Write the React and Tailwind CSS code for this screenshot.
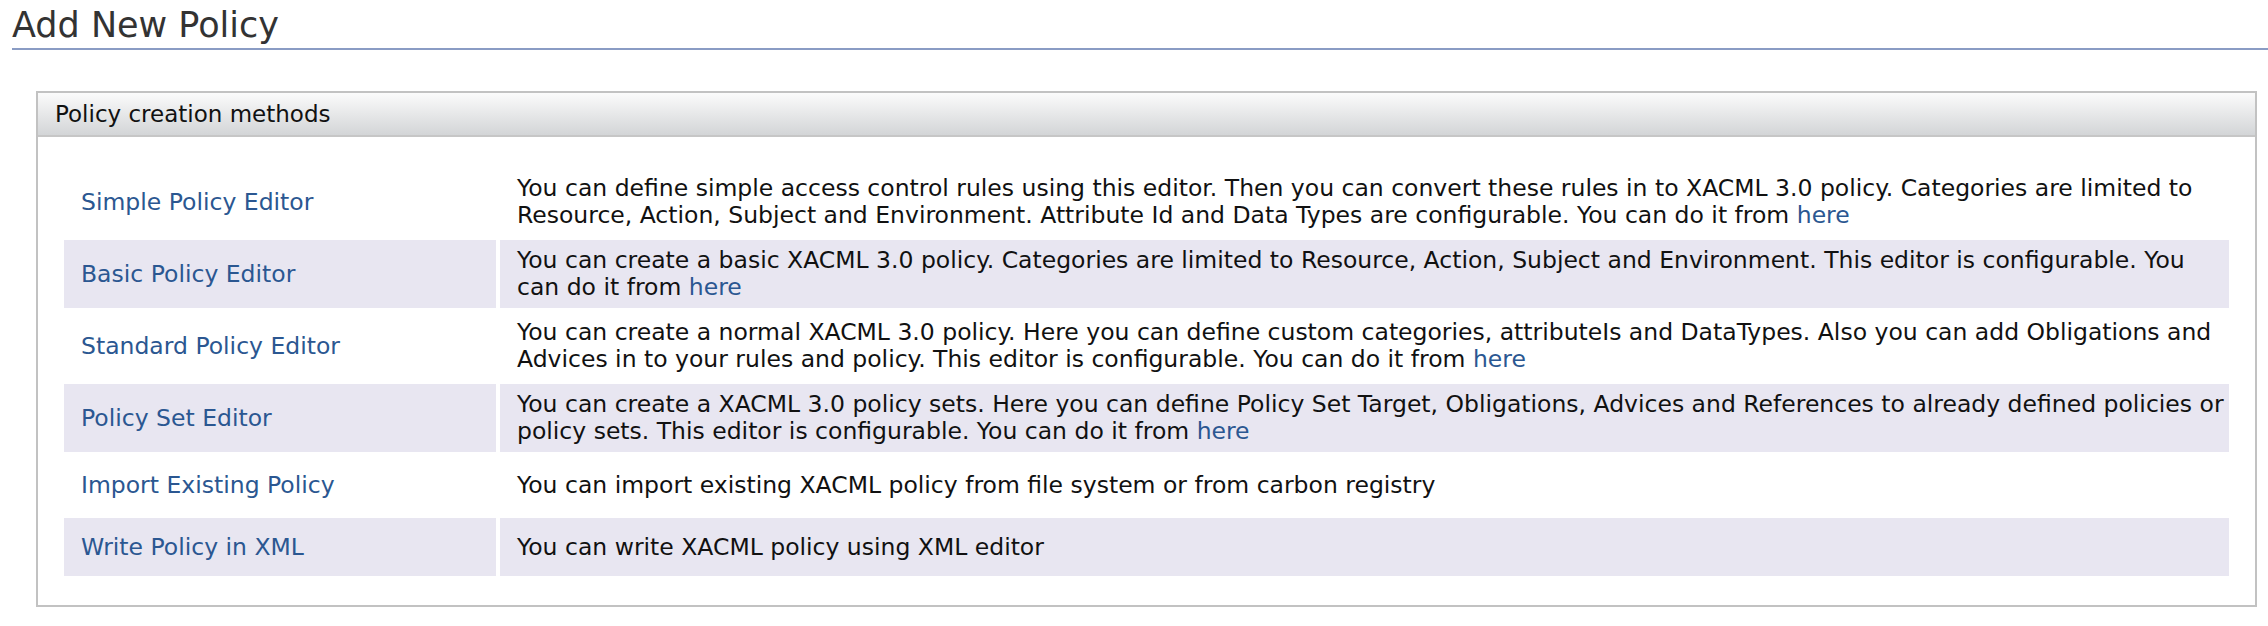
import React from "react";

const methods = [
  {
    name: "Simple Policy Editor",
    text: "You can define simple access control rules using this editor. Then you can convert these rules in to XACML 3.0 policy. Categories are limited to Resource, Action, Subject and Environment. Attribute Id and Data Types are configurable. You can do it from ",
    link: true,
  },
  {
    name: "Basic Policy Editor",
    text: "You can create a basic XACML 3.0 policy. Categories are limited to Resource, Action, Subject and Environment. This editor is configurable. You can do it from ",
    link: true,
  },
  {
    name: "Standard Policy Editor",
    text: "You can create a normal XACML 3.0 policy. Here you can define custom categories, attributeIs and DataTypes. Also you can add Obligations and Advices in to your rules and policy. This editor is configurable. You can do it from ",
    link: true,
  },
  {
    name: "Policy Set Editor",
    text: "You can create a XACML 3.0 policy sets. Here you can define Policy Set Target, Obligations, Advices and References to already defined policies or policy sets. This editor is configurable. You can do it from ",
    link: true,
  },
  {
    name: "Import Existing Policy",
    text: "You can import existing XACML policy from file system or from carbon registry",
    link: false,
  },
  {
    name: "Write Policy in XML",
    text: "You can write XACML policy using XML editor",
    link: false,
  },
];

const App = () => {
  return (
    <div className="min-h-screen bg-white font-['DejaVu_Sans',sans-serif]">
      {/* Page title */}
      <div className="pl-[12px] pt-[4px]">
        <h2 className="text-[35px] leading-[42px] text-[#333333] pb-[2px] border-b-2 border-[#8a9cc4]">
          Add New Policy
        </h2>
      </div>

      {/* Box */}
      <div className="mt-[41px] ml-[36px] mr-[11px] border-2 border-[#c2c2c2]">
        <div className="h-[44px] flex items-center px-[17px] text-[23px] text-[#111] bg-gradient-to-b from-[#fbfbfb] to-[#d3d5d7] border-b-2 border-[#c6c6c6]">
          Policy creation methods
        </div>

        <div className="px-[26px] pt-[31px] pb-[29px]">
          <div className="grid grid-cols-[432px_1fr] gap-[4px] text-[23.5px] leading-[27px]">
            {methods.map((m, i) => {
              const bg = i % 2 === 1 ? "bg-[#e8e6f1]" : "bg-white";
              return (
                <React.Fragment key={m.name}>
                  <div className={`${bg} min-h-[58px] flex items-center px-[17px]`}>
                    <a href="#" className="text-[#2b5791]">
                      {m.name}
                    </a>
                  </div>
                  <div className={`${bg} min-h-[58px] flex items-center pl-[17px] pr-[4px] py-[7px] text-[#111]`}>
                    <p>
                      {m.text}
                      {m.link && (
                        <a href="#" className="text-[#2b5791]">
                          here
                        </a>
                      )}
                    </p>
                  </div>
                </React.Fragment>
              );
            })}
          </div>
        </div>
      </div>
    </div>
  );
};

export default App;
